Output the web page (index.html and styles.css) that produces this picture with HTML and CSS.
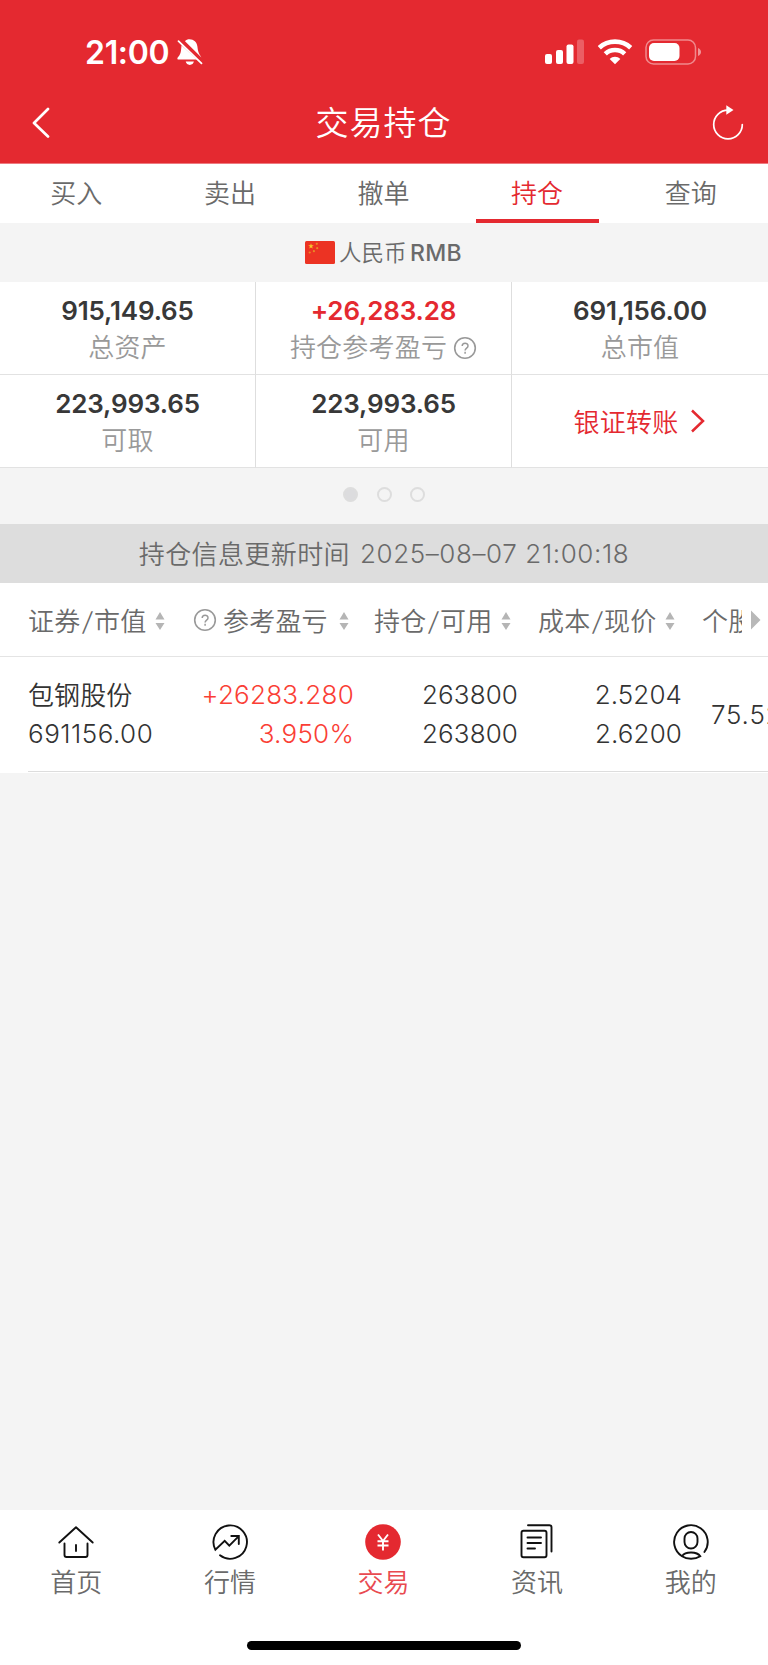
FILE: index.html
```html
<!DOCTYPE html>
<html lang="zh-CN">
<head>
<meta charset="utf-8">
<title>交易持仓</title>
<link rel="stylesheet" href="styles.css">
</head>
<body>
<div class="app">
  <header class="header">
    <div class="status">
      <div class="status-left">
        <span class="clock">21:00</span>
        <svg class="bell" width="28" height="30" viewBox="0 0 28 30">
          <path fill="#fff" d="M9 4.200C10 2.700 11.800 2.300 13.500 2.300c4.300 0 7.400 3 7.900 7.300.5 4.500 1 6.500 4 10.900zM5.500 8.300L20.800 22.600H2.500c-1.200 0-1.500-1.500-.6-2.400 2.600-2.800 3.100-4.500 3.600-11.900zM9.700 24.600h8.200c-.4 2-2 3.300-4.100 3.300s-3.700-1.300-4.100-3.300z"/>
          <path stroke="#fff" stroke-width="1.800" stroke-linecap="round" d="M2.500 4.200L25.500 26.300"/>
        </svg>
      </div>
      <div class="status-right">
        <svg width="40" height="26" viewBox="0 0 40 26">
          <g fill="#fff"><rect x="0" y="15" width="7" height="10" rx="2"/><rect x="11" y="11" width="7" height="14" rx="2"/><rect x="21.500" y="5.500" width="7" height="19.500" rx="2"/><rect x="32" y="0.500" width="7" height="24.500" rx="2" opacity=".25"/></g>
        </svg>
        <svg width="36" height="26" viewBox="0 0 36 26">
          <g fill="none" stroke="#fff" stroke-width="4.600"><path d="M2.300 8.700C11 .6 25 .6 33.700 8.700"/><path d="M8.300 14.800C13.600 9.700 22.400 9.700 27.700 14.800"/></g>
          <path fill="#fff" d="M18 25.200L12.700 19.900C15.600 17.100 20.400 17.100 23.300 19.900z"/>
        </svg>
        <svg width="57" height="26" viewBox="0 0 57 26">
          <rect x="1" y="1" width="49.500" height="24" rx="7.500" fill="none" stroke="#fff" stroke-opacity=".45" stroke-width="1.500"/>
          <rect x="4" y="4" width="30.500" height="18" rx="5" fill="#fff"/>
          <path fill="#fff" fill-opacity=".5" d="M53 9c4 1.500 4 6.500 0 8z"/>
        </svg>
      </div>
    </div>
    <div class="navbar">
      <svg width="20" height="32" viewBox="0 0 20 32"><path fill="none" stroke="#fff" stroke-width="2.700" stroke-linecap="round" stroke-linejoin="round" d="M17 3L3 17 17 30.500"/></svg>
      <h1 class="title">交易持仓</h1>
      <svg width="32" height="36" viewBox="0 0 32 36"><path fill="none" stroke="#fff" stroke-width="1.700" stroke-linecap="round" d="M30.300 20.500A14.300 14.300 0 1 1 16 6.200"/><path fill="#fff" d="M14.300 1.300L21.500 6 14.300 10.700z"/></svg>
    </div>
  </header>

  <nav class="tabs">
    <a class="tab">买入</a><a class="tab">卖出</a><a class="tab">撤单</a><a class="tab active">持仓</a><a class="tab">查询</a>
  </nav>

  <div class="currency">
    <svg width="30" height="23" viewBox="0 0 30 23"><rect width="30" height="23" rx="1.500" fill="#ec3323"/><path fill="#f5c72c" d="M6 2.300l.7 2h2.100L7.100 5.600l.6 2L6 6.400 4.300 7.600l.6-2L3.200 4.300h2.100z"/><g fill="#e98a25"><circle cx="11.800" cy="2.800" r="1.100"/><circle cx="12.200" cy="7.200" r="1.100"/><circle cx="8.900" cy="10.200" r="1.100"/><circle cx="4.700" cy="11.500" r="1.100"/></g></svg>
    <span class="cur-name">人民币</span><span class="cur-code">RMB</span>
  </div>

  <section class="assets">
    <div class="cell"><b class="val">915,149.65</b><span class="lab">总资产</span></div>
    <div class="cell"><b class="val up">+26,283.28</b><span class="lab">持仓参考盈亏<svg class="help" width="24" height="24" viewBox="0 0 24 24"><circle cx="12" cy="12" r="10.300" fill="none" stroke="#999" stroke-width="1.600"/><path fill="none" stroke="#999" stroke-width="1.500" d="M9.200 10.100C9.200 6.300 15 6.400 15 9.900c0 2.300-2.900 2.100-2.900 4.600M12.100 15.800v1.900"/></svg></span></div>
    <div class="cell"><b class="val">691,156.00</b><span class="lab">总市值</span></div>
    <div class="cell"><b class="val">223,993.65</b><span class="lab">可取</span></div>
    <div class="cell"><b class="val">223,993.65</b><span class="lab">可用</span></div>
    <div class="cell transfer"><span class="link">银证转账</span><svg width="16" height="24" viewBox="0 0 16 24"><path fill="none" stroke="#e42930" stroke-width="2.500" d="M2 1.500L13 12 2 22.500"/></svg></div>
  </section>

  <div class="dots"><i class="dot on"></i><i class="dot"></i><i class="dot"></i></div>

  <div class="updated"><span class="upd-label">持仓信息更新时间</span><span class="upd-time">2025–08–07 21:00:18</span></div>

  <section class="table">
    <div class="thead">
      <div class="th c1"><span>证券<span class="slash">/</span>市值</span><svg class="sort" width="10" height="18" viewBox="0 0 10 18"><path fill="#b5b5b5" d="M5 0L9.500 7.500h-9zM5 18L.5 11h9z"/></svg></div>
      <div class="th c2"><svg class="help" width="24" height="24" viewBox="0 0 24 24"><circle cx="12" cy="12" r="10.300" fill="none" stroke="#999" stroke-width="1.600"/><path fill="none" stroke="#999" stroke-width="1.500" d="M9.200 10.100C9.200 6.300 15 6.400 15 9.900c0 2.300-2.900 2.100-2.900 4.600M12.100 15.800v1.900"/></svg><span>参考盈亏</span><svg class="sort" width="10" height="18" viewBox="0 0 10 18"><path fill="#b5b5b5" d="M5 0L9.500 7.500h-9zM5 18L.5 11h9z"/></svg></div>
      <div class="th c3"><span>持仓<span class="slash">/</span>可用</span><svg class="sort" width="10" height="18" viewBox="0 0 10 18"><path fill="#b5b5b5" d="M5 0L9.500 7.500h-9zM5 18L.5 11h9z"/></svg></div>
      <div class="th c4"><span>成本<span class="slash">/</span>现价</span><svg class="sort" width="10" height="18" viewBox="0 0 10 18"><path fill="#b5b5b5" d="M5 0L9.500 7.500h-9zM5 18L.5 11h9z"/></svg></div>
      <div class="th c5"><span>个股</span></div>
      <svg class="more" width="10" height="20" viewBox="0 0 10 20"><path fill="#b8b8b8" d="M0 .5L9.500 10 0 19.500z"/></svg>
    </div>
    <div class="row">
      <div class="td name"><span class="stock">包钢股份</span><span class="num">691156.00</span></div>
      <div class="td gain"><span class="num">+26283.280</span><span class="num">3.950%</span></div>
      <div class="td"><span class="num">263800</span><span class="num">263800</span></div>
      <div class="td"><span class="num">2.5204</span><span class="num">2.6200</span></div>
      <div class="td ratio"><span class="num">75.52</span></div>
    </div>
  </section>

  <div class="filler"></div>

  <footer class="tabbar">
    <a class="item"><svg width="38" height="38" viewBox="0 0 38 38"><g fill="none" stroke="#111" stroke-width="1.900" stroke-linecap="round" stroke-linejoin="round"><path d="M2.300 19.500L19 4.200l16.700 15.300M7.500 20.500v11.500a2 2 0 0 0 2 2h19a2 2 0 0 0 2-2V20.500M19 22v6"/></g></svg><span>首页</span></a>
    <a class="item"><svg width="38" height="38" viewBox="0 0 38 38"><g fill="none" stroke="#111" stroke-width="1.900" stroke-linecap="round" stroke-linejoin="miter"><path d="M9 32.300A16.700 16.700 0 1 0 4.400 26.800L13.700 17.800l4.600 4.800 9-9M20.300 13h7.500v8"/></g></svg><span>行情</span></a>
    <a class="item current"><svg width="38" height="38" viewBox="0 0 38 38"><circle cx="19" cy="19" r="17.800" fill="#e42930"/><path fill="none" stroke="#fff" stroke-width="1.900" d="M14 11.500l5 6.500 5-6.500M13.500 18.300h11M13.500 22.500h11M19 18v9.500"/></svg><span>交易</span></a>
    <a class="item"><svg width="38" height="38" viewBox="0 0 38 38"><g fill="none" stroke="#111" stroke-width="1.900" stroke-linecap="round"><rect x="3.500" y="7.800" width="25" height="26.500" rx="2"/><path d="M10 2.300h21.500a2 2 0 0 1 2 2V28.500M9.500 14.500h13.500M9.500 20h13.500M9.500 25.500h7.500"/></g></svg><span>资讯</span></a>
    <a class="item"><svg width="38" height="38" viewBox="0 0 38 38"><g fill="none" stroke="#111" stroke-width="1.900" stroke-linecap="round"><path d="M32.400 29A16.800 16.800 0 1 0 10 33.200C15 36.600 23 36.600 28.300 33.200C25 28.500 13.500 28 10 33.200"/><rect x="12.500" y="9" width="13" height="16.500" rx="6.500"/></g></svg><span>我的</span></a>
  </footer>
  <div class="home"><div class="home-bar"></div></div>
</div>
</body>
</html>
```
FILE: styles.css
```css
* { box-sizing: border-box; margin: 0; padding: 0; }
body { background: #f4f4f4; font-family: Inter, "Noto Sans CJK SC", sans-serif; font-size: 26px; color: #6a6a6a; font-weight: 350; overflow: hidden; }
svg { display: block; flex: none; }
.app { width: 768px; height: 1665px; display: flex; flex-direction: column; overflow: hidden; }
.app > * { flex: none; }
.header { height: 164px; background: #e42930; border-bottom: 1px solid #ee7a80; color: #fff; }
.status { height: 80px; padding: 25px 66px 0 85px; display: flex; justify-content: space-between; }
.status-left, .status-right { display: flex; align-items: center; height: 54px; }
.clock { font-size: 32px; font-weight: 600; letter-spacing: -0.3px; width: 91px; padding-top: 1px; }
.status-right { gap: 12px; }
.navbar { height: 83px; padding: 0 24px 0 31px; display: flex; align-items: center; justify-content: space-between; }
.title { font-size: 33px; font-weight: 350; letter-spacing: 1px; line-height: 48px; margin: 2px 0 0 4px; }
.tabs { height: 59px; background: #fff; display: grid; grid-template-columns: repeat(5, 1fr); }
.tab { display: flex; justify-content: center; line-height: 60px; padding-right: 1px; }
.tab.active { color: #e42930; box-shadow: inset 0 -4px #e42930; margin: 0 15px; height: 59px; }
.currency { height: 59px; display: flex; align-items: center; justify-content: center; padding-right: 1px; }
.cur-name { font-size: 22.500px; margin: -3px 0 0 4px; width: 71px; }
.cur-code { font-size: 23px; font-weight: 500; letter-spacing: .3px; }
.assets { display: grid; grid-template-columns: repeat(3, 1fr); grid-template-rows: 93px 93px; background: #fff; }
.cell { display: flex; flex-direction: column; align-items: center; border-bottom: 1px solid #e2e2e2; border-right: 1px solid #dedede; padding-top: 11px; }
.cell:nth-child(3n) { border-right: 0; }
.val { font-size: 26px; line-height: 36px; font-weight: 600; letter-spacing: -.15px; color: #383838; }
.up { color: #e42930; }
.lab { display: flex; align-items: center; gap: 6px; line-height: 36px; margin-top: 1px; color: #999; letter-spacing: .2px; }
.transfer { flex-direction: row; justify-content: center; gap: 12px; padding-top: 0; color: #e42930; }
.link { letter-spacing: .2px; margin-top: -2px; }
.dots { height: 56px; display: flex; align-items: center; justify-content: center; gap: 18.500px; padding-bottom: 4px; }
.dot { width: 15px; height: 15px; border-radius: 50%; border: 2px solid #ddd; }
.dot.on { background: #dcdcde; }
.updated { height: 59px; background: #ddd; display: flex; align-items: center; justify-content: center; gap: 10px; }
.upd-label { letter-spacing: .4px; margin-top: -2px; }
.upd-time { letter-spacing: .6px; }
.table { background: #fff; padding-bottom: 1px; }
.thead { height: 74px; border-bottom: 1px solid #e4e4e4; display: flex; align-items: center; padding-left: 28px; }
.th { display: flex; align-items: center; letter-spacing: .2px; white-space: nowrap; }
.slash { display: inline-block; margin: 0 2.200px; transform: skewX(-8deg); }
.sort { margin-left: 9px; margin-top: 3px; }
.c1 { width: 165px; }
.c2 { width: 181px; }
.c2 .help { margin-right: 6px; }
.c2 .sort { margin-left: 11px; }
.c3 { width: 164px; }
.c4 { width: 164px; }
.c5 { width: 40px; overflow: hidden; }
.more { margin-left: 9px; }
.row { height: 115px; margin-left: 28px; border-bottom: 1px solid #ddd; display: grid; grid-template-columns: 150px 176px 164px 164px 86px; overflow: hidden; color: #333; }
.td { display: flex; flex-direction: column; align-items: flex-end; justify-content: center; line-height: 39px; white-space: nowrap; letter-spacing: .1px; }
.name { align-items: flex-start; }
.stock { padding-top: 1px; margin-bottom: -1px; }
.name .num { letter-spacing: .5px; }
.gain { color: #fa3e35; }
.gain .num { letter-spacing: .25px; }
.ratio { align-items: flex-start; padding: 1px 0 0 29px; letter-spacing: .8px; }
.filler { flex: 1; }
.tabbar { height: 100px; background: #fff; display: grid; grid-template-columns: repeat(5, 1fr); }
.item { display: flex; flex-direction: column; align-items: center; padding: 13px 1px 0 0; line-height: 44px; }
.current { color: #e94a50; }
.home { height: 55px; background: #fff; display: flex; justify-content: center; padding-top: 31px; }
.home-bar { width: 274px; height: 9px; border-radius: 5px; background: #000; }
```
